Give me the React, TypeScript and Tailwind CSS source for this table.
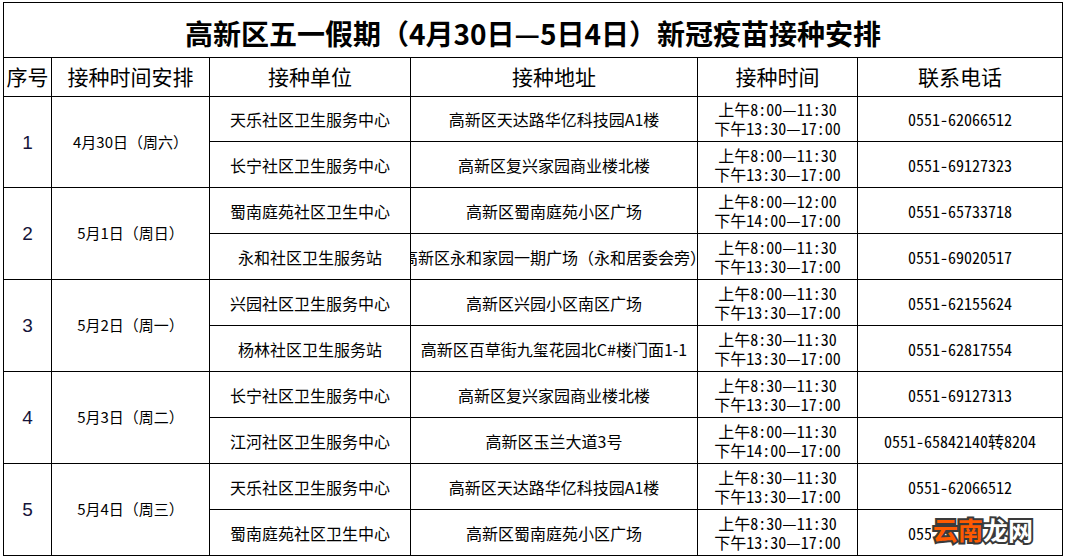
type Row = {
  unit: string;
  address: string;
  am: string;
  pm: string;
  phone: string;
};

type Group = {
  seq: number;
  date: string;
  rows: Row[];
};

const GROUPS: Group[] = [
  {
    seq: 1,
    date: "4月30日（周六）",
    rows: [
      { unit: "天乐社区卫生服务中心", address: "高新区天达路华亿科技园A1楼", am: "上午8:00—11:30", pm: "下午13:30—17:00", phone: "0551-62066512" },
      { unit: "长宁社区卫生服务中心", address: "高新区复兴家园商业楼北楼", am: "上午8:00—11:30", pm: "下午13:30—17:00", phone: "0551-69127323" },
    ],
  },
  {
    seq: 2,
    date: "5月1日（周日）",
    rows: [
      { unit: "蜀南庭苑社区卫生中心", address: "高新区蜀南庭苑小区广场", am: "上午8:00—12:00", pm: "下午14:00—17:00", phone: "0551-65733718" },
      { unit: "永和社区卫生服务站", address: "高新区永和家园一期广场（永和居委会旁）", am: "上午8:00—11:30", pm: "下午13:30—17:00", phone: "0551-69020517" },
    ],
  },
  {
    seq: 3,
    date: "5月2日（周一）",
    rows: [
      { unit: "兴园社区卫生服务中心", address: "高新区兴园小区南区广场", am: "上午8:00—11:30", pm: "下午13:30—17:00", phone: "0551-62155624" },
      { unit: "杨林社区卫生服务站", address: "高新区百草街九玺花园北C#楼门面1-1", am: "上午8:30—11:30", pm: "下午13:30—17:00", phone: "0551-62817554" },
    ],
  },
  {
    seq: 4,
    date: "5月3日（周二）",
    rows: [
      { unit: "长宁社区卫生服务中心", address: "高新区复兴家园商业楼北楼", am: "上午8:30—11:30", pm: "下午13:30—17:00", phone: "0551-69127313" },
      { unit: "江河社区卫生服务中心", address: "高新区玉兰大道3号", am: "上午8:00—11:30", pm: "下午14:00—17:00", phone: "0551-65842140转8204" },
    ],
  },
  {
    seq: 5,
    date: "5月4日（周三）",
    rows: [
      { unit: "天乐社区卫生服务中心", address: "高新区天达路华亿科技园A1楼", am: "上午8:30—11:30", pm: "下午13:30—17:00", phone: "0551-62066512" },
      { unit: "蜀南庭苑社区卫生中心", address: "高新区蜀南庭苑小区广场", am: "上午8:30—11:30", pm: "下午13:30—17:00", phone: "0551-65733718" },
    ],
  },
];

const HEADERS = ["序号", "接种时间安排", "接种单位", "接种地址", "接种时间", "联系电话"];

const cell =
  "flex items-center justify-center overflow-hidden whitespace-nowrap bg-white";

export default function App() {
  return (
    <div className="relative h-[558px] w-[1066px] bg-white font-['Noto_Sans_CJK_SC',sans-serif] text-black">
      <div className="pl-[3px] pt-[2px]">
        <div className="grid w-fit grid-cols-[47px_157px_200px_286px_159px_204px] grid-rows-[54px_38px_44px_repeat(9,45px)] gap-px bg-black p-px">
          {/* title */}
          <div className={`${cell} col-span-6 pt-[6px] text-[28px] font-bold`}>
            高新区五一假期（4月30日—5日4日）新冠疫苗接种安排
          </div>

          {/* header */}
          {HEADERS.map((h) => (
            <div key={h} className={`${cell} text-[21px]`}>
              {h}
            </div>
          ))}

          {GROUPS.map((g) =>
            [
              <div
                key={`s${g.seq}`}
                className={`${cell} row-span-2 pt-[2px] font-['Liberation_Sans',sans-serif] text-[19px] text-[#14143a]`}
              >
                {g.seq}
              </div>,
              <div key={`d${g.seq}`} className={`${cell} row-span-2 text-[15px]`}>
                {g.date}
              </div>,
              ...g.rows.flatMap((r, i) => [
                <div key={`u${g.seq}${i}`} className={`${cell} text-[16px]`}>
                  {r.unit}
                </div>,
                <div key={`a${g.seq}${i}`} className={`${cell} text-[16px]`}>
                  {r.address}
                </div>,
                <div
                  key={`t${g.seq}${i}`}
                  className={`${cell} flex-col text-[16px] leading-[19px] [font-feature-settings:'hwid']`}
                >
                  <span>{r.am}</span>
                  <span>{r.pm}</span>
                </div>,
                <div
                  key={`p${g.seq}${i}`}
                  className={`${cell} text-[16px] [font-feature-settings:'hwid']`}
                >
                  {r.phone}
                </div>,
              ]),
            ],
          )}
        </div>
      </div>

      {/* site watermark */}
      <div className="absolute left-[931px] top-[514px] bg-white px-[2px] text-[25px] font-bold leading-[30px] [-webkit-text-stroke:4px_#3a3a3a] [paint-order:stroke_fill]">
        <span className="text-[#ff5a00]">云南</span>
        <span className="text-white">龙网</span>
      </div>
    </div>
  );
}
